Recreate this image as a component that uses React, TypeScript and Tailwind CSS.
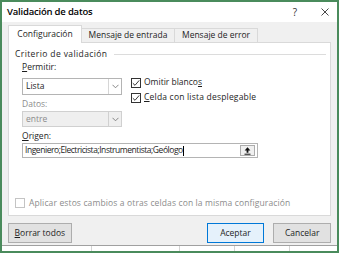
import type { ReactNode } from "react";

function Chevron() {
  return (
    <svg width="7" height="5" viewBox="0 0 7 5" fill="none">
      <path d="M0.5 0.8L3.5 3.8L6.5 0.8" stroke="#7a7a7a" strokeWidth="0.9" />
    </svg>
  );
}

function Check({ checked, disabled }: { checked?: boolean; disabled?: boolean }) {
  return (
    <div
      className={
        disabled
          ? "w-[10px] h-[10px] border border-[#c4c4c4] bg-white shrink-0"
          : "w-[10px] h-[10px] border border-[#333333] bg-white shrink-0 flex items-center justify-center"
      }
    >
      {checked && (
        <svg width="8" height="8" viewBox="0 0 8 8" fill="none">
          <path d="M0.8 4.2L3 6.3L7.2 1.4" stroke="#222222" strokeWidth="0.9" />
        </svg>
      )}
    </div>
  );
}

function Select({ value, disabled }: { value: string; disabled?: boolean }) {
  return (
    <div
      className={
        disabled
          ? "flex w-[100px] h-[16px] border border-[#d0d0d0] bg-[#efefef] text-[#8c8c8c]"
          : "flex w-[100px] h-[17px] border border-[#b4b4b4] bg-white text-[#1e1e1e]"
      }
    >
      <div className="flex-1 flex items-center pl-[3px]">{value}</div>
      <div
        className={
          disabled
            ? "w-[13px] border-l border-[#d0d0d0] flex items-center justify-center"
            : "w-[13px] border-l border-[#d6d6d6] flex items-center justify-center"
        }
      >
        <Chevron />
      </div>
    </div>
  );
}

function Tab({ children, active, w }: { children: ReactNode; active?: boolean; w: string }) {
  return (
    <div
      className={
        active
          ? `${w} h-[18px] -mb-px relative bg-white border border-b-0 border-[#d9d9d9] flex items-center justify-center`
          : `${w} h-[14px] bg-[#f0f0f0] border border-l-0 border-b-0 border-[#d9d9d9] flex items-center justify-center`
      }
    >
      {children}
    </div>
  );
}

export default function App() {
  return (
    <div className="w-[340px] h-[254px] bg-white font-['Open_Sans',sans-serif] text-[8.5px] leading-none text-[#1e1e1e]">
      <div className="w-[339px] h-[253px] border-2 border-[#4a8b5c] flex flex-col">
        {/* title bar */}
        <div className="h-[20px] bg-white flex items-center pl-[5px]">
          <span className="text-[9.5px] font-semibold tracking-[-0.2px] text-black">Validación de datos</span>
          <span className="ml-auto text-[10px] text-[#333333]">?</span>
          <svg className="ml-[24px] mr-[8px]" width="8" height="8" viewBox="0 0 8 8" fill="none">
            <path d="M0.5 0.5L7.5 7.5M7.5 0.5L0.5 7.5" stroke="#333333" strokeWidth="0.9" />
          </svg>
        </div>

        {/* body */}
        <div className="h-[223px] bg-[#f0f0f0] px-[6px] pt-[3px]">
          <div className="flex items-end h-[17px]">
            <Tab active w="w-[74px]">Configuración</Tab>
            <Tab w="w-[93px]">Mensaje de entrada</Tab>
            <Tab w="w-[83px]">Mensaje de error</Tab>
          </div>

          <div className="w-[323px] h-[174px] bg-white border border-[#d9d9d9]">
            <div className="mt-[5px] h-[12px] flex items-center pl-[6px] pr-[4px]">
              <span className="tracking-[0.4px]">Criterio de validación</span>
              <div className="flex-1 h-px bg-[#dcdcdc] ml-[7px]" />
            </div>

            <div className="flex pl-[13px]">
              <div className="w-[100px]">
                <div className="mt-[1px] h-[12px] flex items-center">
                  <span>
                    <span className="underline">P</span>ermitir:
                  </span>
                </div>
                <div className="mt-[5px]">
                  <Select value="Lista" />
                </div>
                <div className="mt-[3px] h-[12px] flex items-center text-[#8c8c8c]">Datos:</div>
                <div className="mt-[1px]">
                  <Select value="entre" disabled />
                </div>
              </div>

              <div className="ml-[9px] mt-[15px]">
                <div className="h-[15px] flex items-center gap-[3px]">
                  <Check checked />
                  <span>
                    Omitir blanco<span className="underline">s</span>
                  </span>
                </div>
                <div className="h-[15px] flex items-center gap-[3px]">
                  <Check checked />
                  <span className="tracking-[0.2px]">
                    <span className="underline">C</span>elda con lista desplegable
                  </span>
                </div>
              </div>
            </div>

            <div className="mt-[3px] h-[12px] flex items-center pl-[13px]">
              <span>
                <span className="underline">O</span>rigen:
              </span>
            </div>
            <div className="mt-[1px] ml-[13px] w-[236px] h-[15px] border border-[#b4b4b4] bg-white flex items-center pl-[2px] pr-[2px]">
              <span className="tracking-[-0.45px]">Ingeniero;Electricista;Instrumentista;Geólogo</span>
              <div className="w-px h-[10px] bg-black" />
              <div className="ml-auto w-[15px] h-[11px] border border-[#adadad] bg-[#f0f0f0] flex items-center justify-center">
                <svg width="7" height="8" viewBox="0 0 7 8" fill="none">
                  <path d="M3.5 0.3L0.6 3.4H2.6V5.8H4.4V3.4H6.4Z" fill="#111111" />
                  <path d="M0.5 7.2H6.5" stroke="#111111" strokeWidth="1" />
                </svg>
              </div>
            </div>

            <div className="mt-[40px] h-[10px] flex items-center pl-[6px] gap-[4px] text-[#8c8c8c]">
              <Check disabled />
              <span className="tracking-[0.13px]">Aplicar estos cambios a otras celdas con la misma configuración</span>
            </div>
          </div>

          <div className="mt-[7px] flex">
            <button className="w-[64px] h-[20px] bg-[#e1e1e1] border border-[#adadad] flex items-center justify-center">
              <span>
                <span className="underline">B</span>orrar todos
              </span>
            </button>
            <button className="ml-[135px] w-[58px] h-[20px] bg-[#e5f1fb] border border-[#0078d7] flex items-center justify-center">
              Aceptar
            </button>
            <button className="ml-[9px] w-[58px] h-[20px] bg-[#e1e1e1] border border-[#adadad] flex items-center justify-center">
              Cancelar
            </button>
          </div>
        </div>

        {/* sheet strip under the dialog */}
        <div className="flex-1 flex border-t border-[#a0a0a0] bg-white">
          <div className="w-[90px] border-r border-[#d4d4d4]" />
          <div className="w-[88px] border-r border-[#d4d4d4]" />
          <div className="w-[55px] border-r border-[#d4d4d4]" />
          <div className="w-[55px] border-r border-[#d4d4d4]" />
        </div>
      </div>
    </div>
  );
}
